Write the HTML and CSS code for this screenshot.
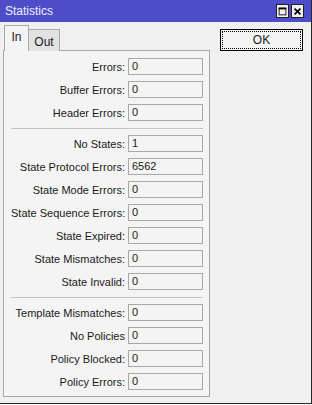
FILE: index.html
```html
<!DOCTYPE html>
<html>
<head>
<meta charset="utf-8">
<link rel="stylesheet" href="styles.css">
</head>
<body>
<div class="window">
  <div class="titlebar">
    <span class="title">Statistics</span>
    <div class="tbtns">
      <span class="tbtn"><svg width="13" height="13" viewBox="0 0 13 13"><rect x="2.5" y="2.5" width="8" height="8" fill="none" stroke="#000" stroke-width="1"/><line x1="2" y1="3" x2="11" y2="3" stroke="#000" stroke-width="2"/></svg></span>
      <span class="tbtn"><svg width="13" height="13" viewBox="0 0 13 13"><path d="M3 3 L10 10 M10 3 L3 10" stroke="#000" stroke-width="2"/></svg></span>
    </div>
  </div>
  <div class="content">
    <div class="left">
      <div class="tabs">
        <div class="tab active">In</div>
        <div class="tab">Out</div>
      </div>
      <div class="panel">
        <div class="section">
          <div class="row"><span class="label">Errors:</span><span class="field">0</span></div>
          <div class="row"><span class="label">Buffer Errors:</span><span class="field">0</span></div>
          <div class="row"><span class="label">Header Errors:</span><span class="field">0</span></div>
        </div>
        <div class="sep"></div>
        <div class="section">
          <div class="row"><span class="label">No States:</span><span class="field">1</span></div>
          <div class="row"><span class="label">State Protocol Errors:</span><span class="field">6562</span></div>
          <div class="row"><span class="label">State Mode Errors:</span><span class="field">0</span></div>
          <div class="row"><span class="label">State Sequence Errors:</span><span class="field">0</span></div>
          <div class="row"><span class="label">State Expired:</span><span class="field">0</span></div>
          <div class="row"><span class="label">State Mismatches:</span><span class="field">0</span></div>
          <div class="row"><span class="label">State Invalid:</span><span class="field">0</span></div>
        </div>
        <div class="sep"></div>
        <div class="section">
          <div class="row"><span class="label">Template Mismatches:</span><span class="field">0</span></div>
          <div class="row"><span class="label">No Policies</span><span class="field">0</span></div>
          <div class="row"><span class="label">Policy Blocked:</span><span class="field">0</span></div>
          <div class="row"><span class="label">Policy Errors:</span><span class="field">0</span></div>
        </div>
      </div>
    </div>
    <div class="right">
      <button class="ok"><span class="focus">OK</span></button>
    </div>
  </div>
</div>
</body>
</html>
```
FILE: styles.css
```css
html, body {
  margin: 0;
  padding: 0;
  background: #ffffff;
}
body {
  font-family: "Liberation Sans", Arial, sans-serif;
  font-size: 11px;
  color: #1a1a1a;
}
.window {
  width: 311px;
  height: 403px;
  background: #f0f0f0;
  border-right: 1px solid #2a2a2a;
  border-bottom: 1px solid #2a2a2a;
  display: flex;
  flex-direction: column;
}
.titlebar {
  height: 22px;
  background: #4d4dc9;
  display: flex;
  align-items: center;
  justify-content: space-between;
  padding: 0 7px 0 5px;
}
.title {
  color: #eeeeff;
  font-size: 12px;
}
.tbtns {
  display: flex;
  gap: 2px;
}
.tbtn {
  width: 13px;
  height: 14px;
  background: #f0f0f0;
  border: 1px solid #202020;
  box-sizing: border-box;
  display: flex;
  align-items: center;
  justify-content: center;
}
.tbtn svg { display: block; width: 11px; height: 11px; }
.content {
  display: flex;
  flex: 1;
  padding-left: 3px;
}
.left {
  width: 207px;
  display: flex;
  flex-direction: column;
}
.tabs {
  display: flex;
  align-items: flex-end;
  height: 29px;
  padding-left: 1px;
  position: relative;
  z-index: 1;
  margin-bottom: -1px;
}
.tab {
  border: 1px solid #a8a8a8;
  border-bottom: none;
  box-sizing: border-box;
  display: flex;
  align-items: center;
  justify-content: center;
  font-size: 12px;
}
.tab.active {
  width: 25px;
  height: 26px;
  background: #f4f4f4;
  padding-bottom: 4px;
}
.tab:not(.active) {
  width: 31px;
  height: 22px;
  background: #e2e2e2;
  border-left: none;
  padding-top: 2px;
}
.panel {
  height: 347px;
  box-sizing: border-box;
  background: #f4f4f4;
  border: 1px solid #a8a8a8;
  padding: 7px 0 0 7px;
}
.section {
  display: flex;
  flex-direction: column;
  gap: 6px;
}
.row {
  display: flex;
  align-items: center;
  height: 17px;
}
.label {
  width: 117px;
  text-align: right;
  white-space: nowrap;
  padding-right: 3px;
  box-sizing: border-box;
}
.field {
  width: 75px;
  height: 17px;
  box-sizing: border-box;
  border: 1px solid #a8a8a8;
  background: #f4f4f4;
  padding-left: 3px;
  line-height: 15px;
}
.sep {
  width: 192px;
  height: 1px;
  background: #c4c4c4;
  margin: 7px 0 6px 0;
}
.right {
  padding: 7px 0 0 10px;
}
.ok {
  width: 83px;
  height: 22px;
  border: 1px solid #000;
  background: #f4f4f4;
  padding: 1px;
  margin: 0;
  font-family: inherit;
  font-size: 12px;
  color: #1a1a1a;
  box-sizing: border-box;
  display: flex;
}
.focus {
  flex: 1;
  border: 1px dotted #000;
  display: flex;
  align-items: center;
  justify-content: center;
}
```
